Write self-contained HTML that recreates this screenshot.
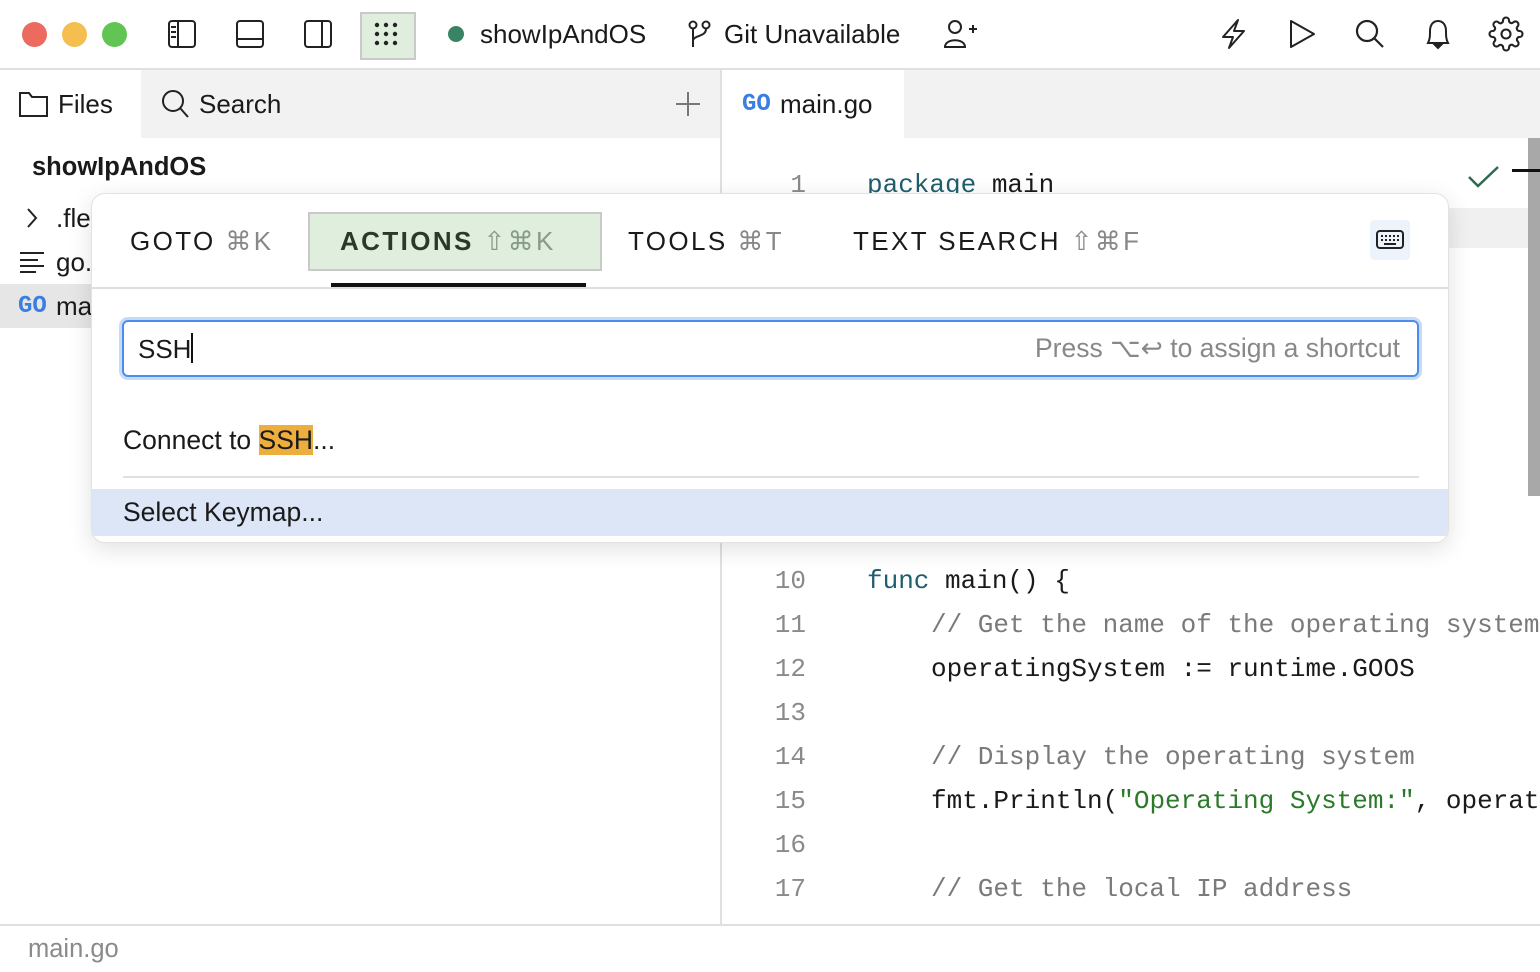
<!DOCTYPE html>
<html><head><meta charset="utf-8"><style>
*{margin:0;padding:0;box-sizing:border-box}
body{width:1540px;height:972px;overflow:hidden;background:#fff;font-family:"Liberation Sans",sans-serif;color:#1a1a1a;position:relative}
.a{position:absolute;white-space:nowrap}
.mono{font-family:"Liberation Mono",monospace}
.ln{position:absolute;left:740px;width:66px;text-align:right;font-family:"Liberation Mono",monospace;font-size:26px;color:#8a8a8a}
.cd{position:absolute;font-family:"Liberation Mono",monospace;font-size:26px;color:#1a1a1a;white-space:pre}
.cm{color:#7a7a7a}.kw{color:#1f5e6e}.st{color:#2a7a2a}
svg{position:absolute}
</style></head><body>
<div class="a" style="left:22px;top:22px;width:25px;height:25px;border-radius:50%;background:#ec6a5e"></div>
<div class="a" style="left:62px;top:22px;width:25px;height:25px;border-radius:50%;background:#f4bf4f"></div>
<div class="a" style="left:102px;top:22px;width:25px;height:25px;border-radius:50%;background:#61c554"></div>
<svg style="left:166px;top:18px" width="32" height="32" viewBox="0 0 32 32" fill="none" stroke="#222" stroke-width="2"><rect x="3" y="3" width="26" height="26" rx="3"/><line x1="12" y1="3" x2="12" y2="29"/><line x1="5" y1="9" x2="10" y2="9"/><line x1="5" y1="14" x2="10" y2="14"/><line x1="5" y1="19" x2="10" y2="19"/></svg>
<svg style="left:234px;top:18px" width="32" height="32" viewBox="0 0 32 32" fill="none" stroke="#222" stroke-width="2"><rect x="3" y="3" width="26" height="26" rx="3"/><line x1="3" y1="21" x2="29" y2="21"/></svg>
<svg style="left:302px;top:18px" width="32" height="32" viewBox="0 0 32 32" fill="none" stroke="#222" stroke-width="2"><rect x="3" y="3" width="26" height="26" rx="3"/><line x1="20" y1="3" x2="20" y2="29"/></svg>
<div class="a" style="left:360px;top:12px;width:56px;height:48px;background:#dfeedd;border:2px solid #c9c9c9"></div>
<svg style="left:372px;top:20px" width="30" height="30" viewBox="0 0 30 30" fill="#222"><circle cx="5" cy="5" r="2.2"/><circle cx="14" cy="5" r="2.2"/><circle cx="23" cy="5" r="2.2"/><circle cx="5" cy="14" r="2.2"/><circle cx="14" cy="14" r="2.2"/><circle cx="23" cy="14" r="2.2"/><circle cx="5" cy="23" r="2.2"/><circle cx="14" cy="23" r="2.2"/><circle cx="23" cy="23" r="2.2"/></svg>
<div class="a" style="left:448px;top:26px;width:16px;height:16px;border-radius:50%;background:#3a8466"></div>
<div class="a" style="left:480px;top:19px;font-size:26px">showIpAndOS</div>
<svg style="left:686px;top:19px" width="28" height="30" viewBox="0 0 28 30" fill="none" stroke="#222" stroke-width="2"><circle cx="7" cy="6" r="3.5"/><circle cx="20" cy="6" r="3.5"/><line x1="7" y1="10" x2="7" y2="28"/><path d="M20 10 C20 18 7 16 7 22"/></svg>
<div class="a" style="left:724px;top:19px;font-size:26px">Git Unavailable</div>
<svg style="left:942px;top:18px" width="36" height="32" viewBox="0 0 36 32" fill="none" stroke="#222" stroke-width="2"><circle cx="13" cy="9" r="6"/><path d="M3 29 C3 20 23 20 23 29 Z"/><line x1="27" y1="11" x2="35" y2="11"/><line x1="31" y1="7" x2="31" y2="15"/></svg>
<svg style="left:1218px;top:18px" width="32" height="32" viewBox="0 0 32 32" fill="none" stroke="#222" stroke-width="2" stroke-linejoin="round"><path d="M20 2 L5 19 H15 L11 30 L26 13 H16 Z"/></svg>
<svg style="left:1286px;top:18px" width="32" height="32" viewBox="0 0 32 32" fill="none" stroke="#222" stroke-width="2" stroke-linejoin="round"><path d="M5 3 L28 16 L5 29 Z"/></svg>
<svg style="left:1354px;top:18px" width="32" height="32" viewBox="0 0 32 32" fill="none" stroke="#222" stroke-width="2.2"><circle cx="13" cy="13" r="10"/><line x1="20" y1="20" x2="29" y2="29"/></svg>
<svg style="left:1422px;top:18px" width="32" height="32" viewBox="0 0 32 32" fill="none" stroke="#222" stroke-width="2"><path d="M6 25 C8 21 8 18 8 13 C8 7 11 3 16 3 C21 3 24 7 24 13 C24 18 24 21 26 25 Z"/><path d="M13 27 h6 l-3 3z" fill="#222"/></svg>
<svg style="left:1488px;top:16px" width="36" height="36" viewBox="0 0 24 24" fill="none" stroke="#222" stroke-width="1.4"><circle cx="12" cy="12" r="3"/><path d="M19.4 15a1.65 1.65 0 0 0 .33 1.82l.06.06a2 2 0 1 1-2.830 2.83l-.06-.06a1.65 1.65 0 0 0-1.82-.33 1.65 1.65 0 0 0-1 1.51V21a2 2 0 1 1-4 0v-.09A1.65 1.65 0 0 0 9 19.4a1.650 1.65 0 0 0-1.820.33l-.06.06a2 2 0 1 1-2.83-2.83l.06-.06A1.65 1.65 0 0 0 4.68 15a1.65 1.65 0 0 0-1.51-1H3a2 2 0 1 1 0-4h.09A1.65 1.65 0 0 0 4.6 9a1.65 1.65 0 0 0-.33-1.82l-.06-.06a2 2 0 1 1 2.83-2.83l.06.06A1.65 1.65 0 0 0 9 4.68 1.65 1.65 0 0 0 10 3.17V3a2 2 0 1 1 4 0v.09a1.65 1.65 0 0 0 1 1.51 1.65 1.65 0 0 0 1.82-.33l.06-.06a2 2 0 1 1 2.83 2.83l-.06.06A1.65 1.65 0 0 0 19.4 9a1.65 1.65 0 0 0 1.51 1H21a2 2 0 1 1 0 4h-.09a1.65 1.65 0 0 0-1.51 1z"/></svg>
<div class="a" style="left:0;top:68px;width:1540px;height:2px;background:#e0e0e0"></div>
<div class="a" style="left:0;top:70px;width:1540px;height:68px;background:#f2f2f2"></div>
<div class="a" style="left:0;top:70px;width:141px;height:68px;background:#fff"></div>
<svg style="left:18px;top:90px" width="32" height="28" viewBox="0 0 32 28" fill="none" stroke="#222" stroke-width="2"><path d="M2 3 H11 L14 7 H29 V26 H2 Z"/></svg>
<div class="a" style="left:58px;top:89px;font-size:26px">Files</div>
<svg style="left:160px;top:88px" width="32" height="32" viewBox="0 0 32 32" fill="none" stroke="#222" stroke-width="2"><circle cx="13" cy="13" r="10"/><line x1="20" y1="20" x2="28" y2="29"/></svg>
<div class="a" style="left:199px;top:89px;font-size:26px">Search</div>
<svg style="left:674px;top:90px" width="28" height="28" viewBox="0 0 28 28" stroke="#777" stroke-width="2"><line x1="14" y1="2" x2="14" y2="26"/><line x1="2" y1="14" x2="26" y2="14"/></svg>
<div class="a" style="left:720px;top:70px;width:2px;height:855px;background:#e0e0e0"></div>
<div class="a" style="left:722px;top:70px;width:182px;height:68px;background:#fff"></div>
<div class="a mono" style="left:742px;top:91px;font-size:24px;color:#3a7ee0;font-weight:bold">GO</div>
<div class="a" style="left:780px;top:89px;font-size:26px">main.go</div>
<div class="a" style="left:32px;top:153px;font-size:25.5px;font-weight:bold">showIpAndOS</div>
<svg style="left:24px;top:206px" width="16" height="24" viewBox="0 0 16 24" fill="none" stroke="#222" stroke-width="2"><path d="M4 3 L12 12 L4 21"/></svg>
<div class="a" style="left:56px;top:203px;font-size:26px">.fle</div>
<svg style="left:18px;top:250px" width="28" height="24" viewBox="0 0 28 24" stroke="#222" stroke-width="2"><line x1="2" y1="3" x2="26" y2="3"/><line x1="2" y1="10" x2="20" y2="10"/><line x1="2" y1="16" x2="26" y2="16"/><line x1="2" y1="22" x2="18" y2="22"/></svg>
<div class="a" style="left:56px;top:247px;font-size:26px">go.</div>
<div class="a" style="left:0;top:284px;width:100px;height:44px;background:#e6e6e6"></div>
<div class="a mono" style="left:18px;top:293px;font-size:24px;color:#3a7ee0;font-weight:bold">GO</div>
<div class="a" style="left:56px;top:291px;font-size:26px">ma</div>
<div class="a" style="left:722px;top:208px;width:806px;height:40px;background:#f0f0f0"></div>
<div class="a" style="left:1528px;top:138px;width:12px;height:358px;background:#a8a8a8"></div>
<div class="a" style="left:1512px;top:169px;width:28px;height:3px;background:#111"></div>
<svg style="left:1466px;top:164px" width="36" height="26" viewBox="0 0 36 26" fill="none" stroke="#2d6b50" stroke-width="2.5"><path d="M3 13 L12 22 L32 3"/></svg>
<div class="ln" style="top:170px">1</div><div class="cd" style="left:867px;top:170px"><span class="kw">package</span> main</div>
<div class="ln" style="top:566px">10</div><div class="cd" style="left:867px;top:566px"><span class="kw">func</span> main() {</div>
<div class="ln" style="top:610px">11</div><div class="cd cm" style="left:931px;top:610px">// Get the name of the operating system</div>
<div class="ln" style="top:654px">12</div><div class="cd" style="left:931px;top:654px">operatingSystem := runtime.GOOS</div>
<div class="ln" style="top:698px">13</div>
<div class="ln" style="top:742px">14</div><div class="cd cm" style="left:931px;top:742px">// Display the operating system</div>
<div class="ln" style="top:786px">15</div><div class="cd" style="left:931px;top:786px">fmt.Println(<span class="st">"Operating System:"</span>, operat</div>
<div class="ln" style="top:830px">16</div>
<div class="ln" style="top:874px">17</div><div class="cd cm" style="left:931px;top:874px">// Get the local IP address</div>
<div class="a" style="left:0;top:924px;width:1540px;height:48px;background:#fff;border-top:2px solid #e0e0e0"></div>
<div class="a" style="left:28px;top:935px;font-size:25.5px;color:#8a8a8a">main.go</div>
<div class="a" style="left:91px;top:193px;width:1358px;height:350px;background:#fff;border:1px solid #e2e2e2;border-radius:14px;box-shadow:0 6px 24px rgba(0,0,0,0.12);overflow:hidden">
  <div class="a" style="left:38px;top:32px;font-size:26px;letter-spacing:2.4px">GOTO <span style="color:#888">⌘K</span></div>
  <div class="a" style="left:216px;top:18px;width:294px;height:59px;background:#dfeedd;border:2px solid #c9c9c9"></div>
  <div class="a" style="left:248px;top:32px;font-size:26px;letter-spacing:2.4px;font-weight:bold;color:#2a3a2a">ACTIONS <span style="color:#889a88;font-weight:normal">⇧⌘K</span></div>
  <div class="a" style="left:239px;top:89px;width:255px;height:4px;background:#111"></div>
  <div class="a" style="left:536px;top:32px;font-size:26px;letter-spacing:2.4px">TOOLS <span style="color:#888">⌘T</span></div>
  <div class="a" style="left:761px;top:32px;font-size:26px;letter-spacing:2.4px">TEXT SEARCH <span style="color:#888">⇧⌘F</span></div>
  <div class="a" style="left:1278px;top:26px;width:40px;height:40px;background:#edf3fb;border-radius:4px"></div>
  <svg style="left:1284px;top:34px" width="28" height="24" viewBox="0 0 28 24" fill="none" stroke="#222" stroke-width="2"><rect x="1" y="3" width="26" height="17" rx="3"/><g fill="#222" stroke="none"><rect x="5" y="7" width="2" height="2"/><rect x="9" y="7" width="2" height="2"/><rect x="13" y="7" width="2" height="2"/><rect x="17" y="7" width="2" height="2"/><rect x="21" y="7" width="2" height="2"/><rect x="5" y="11" width="2" height="2"/><rect x="9" y="11" width="2" height="2"/><rect x="13" y="11" width="2" height="2"/><rect x="17" y="11" width="2" height="2"/><rect x="21" y="11" width="2" height="2"/></g><line x1="8" y1="16" x2="20" y2="16"/></svg>
  <div class="a" style="left:0;top:93px;width:1358px;height:2px;background:#dedede"></div>
  <div class="a" style="left:30px;top:126px;width:1297px;height:57px;border:2px solid #4a8cf0;border-radius:6px;box-shadow:0 0 0 3px #c6dbf8"></div>
  <div class="a" style="left:46px;top:139px;font-size:26px">SSH<span style="display:inline-block;width:2px;height:30px;background:#111;vertical-align:-5px"></span></div>
  <div class="a" style="right:48px;top:139px;font-size:26.5px;color:#888">Press ⌥↩ to assign a shortcut</div>
  <div class="a" style="left:31px;top:231px;font-size:26.5px">Connect to <span style="background:#eeae3e">SSH</span>...</div>
  <div class="a" style="left:31px;top:282px;width:1296px;height:2px;background:#e0e0e0"></div>
  <div class="a" style="left:0;top:295px;width:1358px;height:47px;background:#dce6f7"></div>
  <div class="a" style="left:31px;top:303px;font-size:26.5px">Select Keymap...</div>
</div>
</body></html>
